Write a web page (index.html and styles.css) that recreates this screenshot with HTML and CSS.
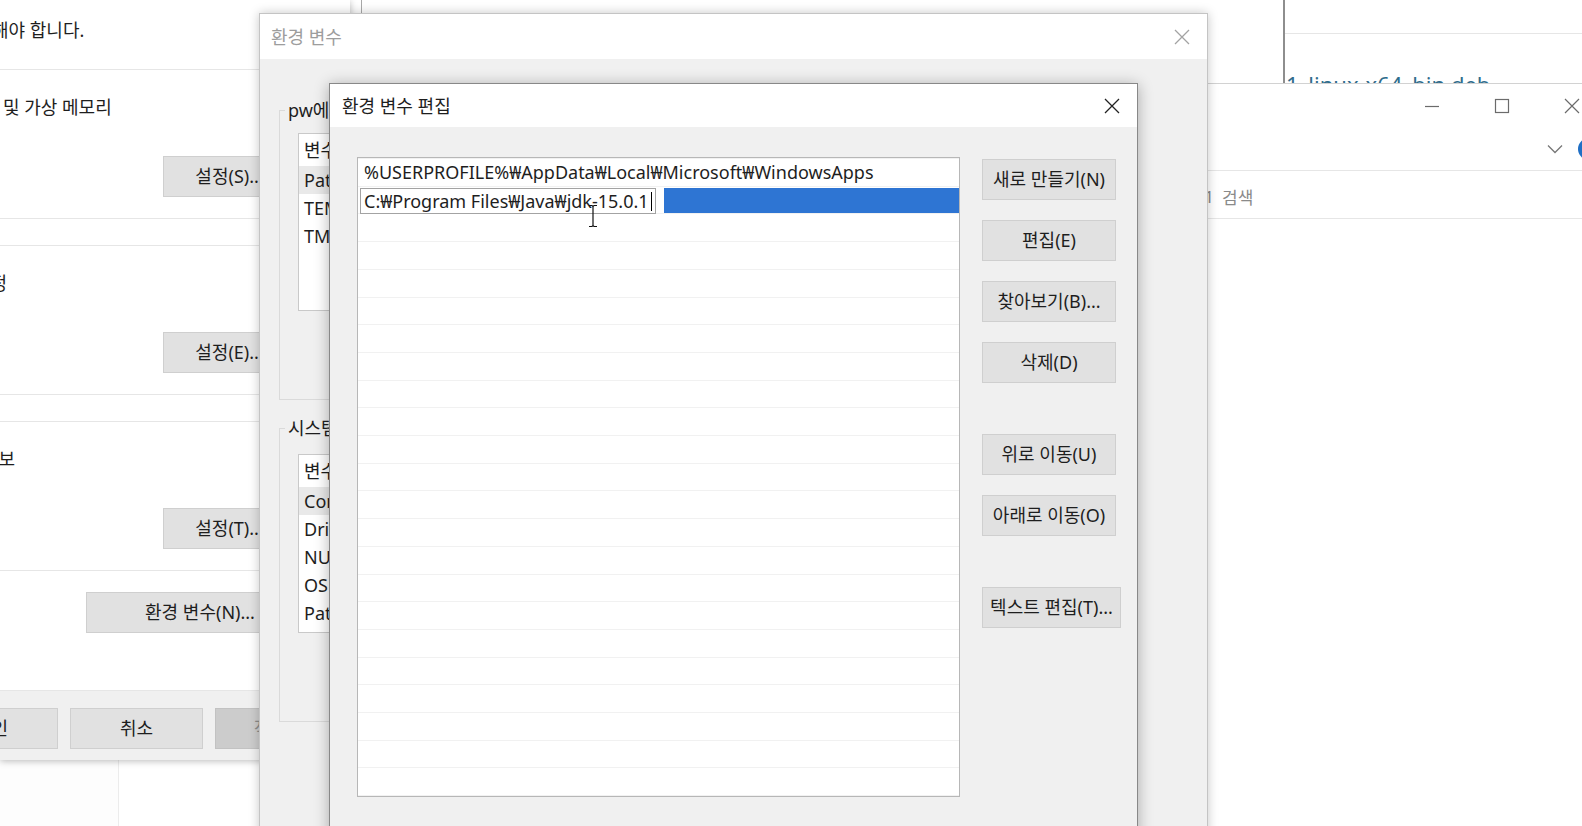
FILE: index.html
```html
<!DOCTYPE html>
<html lang="ko">

<head>
    <meta charset="UTF-8">
    <meta name="viewport" content="width=device-width, initial-scale=1.0">
    <title>환경 변수 편집</title>
    <link rel="stylesheet" href="styles.css">
</head>

<body>
    <div class="desktop">
        <!-- Fenster im Hintergrund -->
        <div class="backwin"></div>

        <div class="win browser">
            <div class="browser-main"></div>
            <div class="browser-side">
                <div class="side-head"></div>
                <div class="side-file">1_linux-x64_bin.deb</div>
            </div>
        </div>

        <!-- Systemeigenschaften -->
        <section class="win sysprops">
            <div class="sp-body">
                <p class="sp-note">해야 합니다.</p>
                <div class="sp-group">
                    <p class="sp-text">및 가상 메모리</p>
                    <button class="btn sp-btn">설정(S)...</button>
                </div>
                <div class="sp-group">
                    <p class="sp-text cut-one">설정</p>
                    <button class="btn sp-btn">설정(E)...</button>
                </div>
                <div class="sp-group">
                    <p class="sp-text cut-two">정보</p>
                    <button class="btn sp-btn">설정(T)...</button>
                </div>
                <button class="btn sp-envbtn">환경 변수(N)...</button>
            </div>
            <div class="sp-footer">
                <button class="btn sp-ok">확인</button>
                <button class="btn">취소</button>
                <button class="btn disabled">적용(A)</button>
            </div>
        </section>

        <!-- Explorer -->
        <section class="win explorer">
            <div class="ex-caption">
                <span class="cap-btn">
                    <svg width="16" height="16" viewBox="0 0 16 16"><path d="M1 8.5H15" stroke="#6b6b6b" stroke-width="1.2" /></svg>
                </span>
                <span class="cap-btn">
                    <svg width="16" height="16" viewBox="0 0 16 16"><rect x="1.5" y="1.5" width="13" height="13" fill="none" stroke="#6b6b6b" stroke-width="1.2" /></svg>
                </span>
                <span class="cap-btn">
                    <svg width="16" height="16" viewBox="0 0 16 16"><path d="M1 1L15 15M15 1L1 15" stroke="#6b6b6b" stroke-width="1.2" /></svg>
                </span>
            </div>
            <div class="ex-address">
                <svg class="chevron" width="16" height="10" viewBox="0 0 16 10"><path d="M1 1.5L8 8.5L15 1.5" fill="none" stroke="#777" stroke-width="1.3" /></svg>
                <span class="help-dot"></span>
            </div>
            <div class="ex-search">
                <span class="ex-folder">jdk-15.0.1</span>
                <span class="ex-hint">검색</span>
            </div>
        </section>

        <!-- Umgebungsvariablen -->
        <section class="win dialog envvars">
            <header class="dlg-title">
                <span>환경 변수</span>
                <svg width="16" height="16" viewBox="0 0 16 16"><path d="M1 1L15 15M15 1L1 15" stroke="#a3a3a3" stroke-width="1.3" /></svg>
            </header>
            <div class="env-body">
                <fieldset class="vargroup">
                    <legend>pw에 대한 사용자 변수(U)</legend>
                    <div class="varlist user">
                        <div class="vl-head">변수</div>
                        <div class="vl-row sel">Path</div>
                        <div class="vl-row">TEMP</div>
                        <div class="vl-row">TMP</div>
                    </div>
                </fieldset>
                <fieldset class="vargroup sys">
                    <legend>시스템 변수(S)</legend>
                    <div class="varlist system">
                        <div class="vl-head">변수</div>
                        <div class="vl-row sel">ComSpec</div>
                        <div class="vl-row">DriverData</div>
                        <div class="vl-row">NUMBER_OF_PROCESSORS</div>
                        <div class="vl-row">OS</div>
                        <div class="vl-row">Path</div>
                    </div>
                </fieldset>
            </div>
        </section>

        <!-- Umgebungsvariable bearbeiten -->
        <section class="win dialog editvar">
            <header class="dlg-title">
                <span>환경 변수 편집</span>
                <svg width="16" height="16" viewBox="0 0 16 16"><path d="M1 1L15 15M15 1L1 15" stroke="#222" stroke-width="1.3" /></svg>
            </header>
            <div class="edit-body">
                <div class="pathlist">
                    <div class="pl-row">%USERPROFILE%₩AppData₩Local₩Microsoft₩WindowsApps</div>
                    <div class="pl-row editing">
                        <span class="pl-editor">C:₩Program Files₩Java₩jdk-15.0.1<i class="caret"></i></span>
                        <span class="pl-selected"></span>
                    </div>
                    <svg class="ibeam" width="10" height="24" viewBox="0 0 10 24">
                        <path d="M1 1.5H4L5 2.5L6 1.5H9M5 2.5V21.5M1 22.5H4L5 21.5L6 22.5H9" fill="none" stroke="#111" stroke-width="1.2" />
                    </svg>
                </div>
                <div class="side-buttons">
                    <button class="btn">새로 만들기(N)</button>
                    <button class="btn">편집(E)</button>
                    <button class="btn">찾아보기(B)...</button>
                    <button class="btn">삭제(D)</button>
                    <button class="btn spaced">위로 이동(U)</button>
                    <button class="btn">아래로 이동(O)</button>
                    <button class="btn spaced wide">텍스트 편집(T)...</button>
                </div>
            </div>
        </section>
    </div>
</body>

</html>
```

FILE: styles.css
```css
html,
body {
    margin: 0;
}

body {
    width: 1582px;
    height: 826px;
    overflow: hidden;
    background: #fff;
    font-family: "Noto Sans", "Noto Sans CJK KR", sans-serif;
    font-size: 18px;
    color: #1e1e1e;
}

.desktop {
    position: relative;
    width: 1582px;
    height: 826px;
    overflow: hidden;
    background: #fdfdfd;
}

.win {
    position: absolute;
    box-sizing: border-box;
}

.btn {
    box-sizing: border-box;
    height: 41px;
    padding: 0;
    background: #e1e1e1;
    border: 1px solid #cfcfcf;
    font: inherit;
    color: inherit;
    line-height: 39px;
    text-align: center;
    white-space: nowrap;
}

.btn.disabled {
    background: #cccccc;
    border-color: #c2c2c2;
    color: #8c8c8c;
}

/* hinten */
.backwin {
    position: absolute;
    left: 118px;
    top: 0;
    width: 400px;
    height: 826px;
    background: #fff;
    border-left: 1px solid #ececec;
}

.browser {
    left: 361px;
    top: 0;
    width: 1221px;
    height: 100px;
    background: #fff;
    border-left: 1px solid #a9a9a9;
    display: flex;
}

.browser-main {
    width: 921px;
}

.browser-side {
    flex: 1;
    border-left: 2px solid #8e8e8e;
}

.side-head {
    height: 33px;
    border-bottom: 1px solid #e6e6e6;
}

.side-file {
    margin-top: 39px;
    padding-left: 1px;
    font-size: 22px;
    line-height: 22px;
    color: #2f6c8c;
    white-space: nowrap;
}

/* Systemeigenschaften */
.sysprops {
    left: 0;
    top: 0;
    width: 350px;
    height: 760px;
    background: #fff;
    display: flex;
    flex-direction: column;
    box-shadow: 0 1px 7px rgba(0, 0, 0, 0.28);
}

.sp-body {
    flex: 1;
    display: flex;
    flex-direction: column;
    padding-right: 54px;
}

.sp-note {
    margin: 0;
    padding: 19px 0 28px;
    line-height: 22px;
    text-indent: -8px;
    border-bottom: 1px solid #e6e6e6;
}

.sp-group {
    display: flex;
    flex-direction: column;
    padding: 26px 0 21px;
    border-bottom: 1px solid #e6e6e6;
}

.sp-group + .sp-group {
    margin-top: 26px;
    border-top: 1px solid #e6e6e6;
}

.sp-text {
    margin: 0;
    padding-left: 3px;
    line-height: 22px;
    white-space: nowrap;
}

.sp-text.cut-one {
    padding-left: 0;
    text-indent: -26px;
}

.sp-text.cut-two {
    padding-left: 0;
    text-indent: -18px;
}

.sp-btn {
    align-self: flex-end;
    width: 133px;
    margin-top: 38px;
}

.sp-envbtn {
    align-self: flex-end;
    width: 228px;
    margin: 21px -18px 0 0;
}

.sp-footer {
    box-sizing: border-box;
    height: 70px;
    padding-top: 17px;
    display: flex;
    gap: 12px;
    background: #f0f0f0;
    border-top: 1px solid #e6e6e6;
}

.sp-footer .btn {
    flex: none;
    width: 133px;
}

.sp-ok {
    margin-left: -75px;
}

/* Explorer */
.explorer {
    left: 1100px;
    top: 83px;
    width: 507px;
    height: 760px;
    background: #fff;
    border-top: 1px solid #d2d2d2;
}

.ex-caption {
    height: 43px;
    display: flex;
    justify-content: flex-end;
}

.cap-btn {
    width: 70px;
    display: flex;
    align-items: center;
    justify-content: center;
}

.ex-address {
    box-sizing: border-box;
    height: 44px;
    padding-right: 7px;
    display: flex;
    align-items: center;
    justify-content: flex-end;
    border-bottom: 1px solid #e6e6e6;
}

.chevron {
    margin-right: 15px;
}

.help-dot {
    width: 22px;
    height: 22px;
    border-radius: 50%;
    background: #1f6fc5;
}

.ex-search {
    box-sizing: border-box;
    height: 48px;
    padding-top: 4px;
    display: flex;
    align-items: center;
    border-bottom: 1px solid #e6e6e6;
    font-size: 17px;
    color: #8a8a8a;
}

.ex-folder {
    width: 114px;
    text-align: right;
    white-space: nowrap;
}

.ex-hint {
    margin-left: 8px;
}

/* Dialoge */
.dialog {
    display: flex;
    flex-direction: column;
    background: #f0f0f0;
}

.dlg-title {
    display: flex;
    align-items: center;
    justify-content: space-between;
    background: #fff;
    line-height: 22px;
}

.envvars {
    left: 259px;
    top: 13px;
    width: 949px;
    height: 830px;
    border: 1px solid #c4c4c4;
    box-shadow: 0 0 10px rgba(0, 0, 0, 0.22);
}

.envvars .dlg-title {
    height: 45px;
    padding: 0 17px 0 11px;
    color: #9d9d9d;
}

.env-body {
    padding: 40px 0 0 19px;
}

.vargroup {
    width: 820px;
    margin: 0;
    padding: 0 0 88px 18px;
    border: 1px solid #dadada;
}

/* der Rest liegt unter dem Bearbeiten-Dialog */
.vargroup legend {
    max-width: 44px;
    margin-left: -13px;
    padding: 0 3px;
    box-sizing: border-box;
    overflow: hidden;
    line-height: 22px;
    white-space: nowrap;
}

.vargroup.sys {
    margin-top: 17px;
}

.varlist {
    box-sizing: border-box;
    width: 780px;
    height: 178px;
    margin-top: 12px;
    background: #fff;
    border: 1px solid #c9c9c9;
}

.varlist.system {
    height: 179px;
    margin-top: 15px;
}

.vl-head {
    height: 32px;
    padding-left: 5px;
    line-height: 32px;
}

.vl-row {
    height: 28px;
    padding-left: 5px;
    line-height: 28px;
    white-space: nowrap;
}

.vl-row.sel {
    background: #e9e9e9;
}

.editvar {
    left: 329px;
    top: 83px;
    width: 809px;
    height: 760px;
    border: 1px solid #888;
    box-shadow: 0 2px 14px rgba(0, 0, 0, 0.3);
}

.editvar .dlg-title {
    height: 43px;
    padding: 0 17px 0 12px;
}

.edit-body {
    display: flex;
    align-items: flex-start;
    padding: 30px 0 0 27px;
}

.pathlist {
    position: relative;
    box-sizing: border-box;
    width: 603px;
    height: 640px;
    padding-top: 1px;
    border: 1px solid #b7b7b7;
    background-color: #fff;
    background-image: repeating-linear-gradient(to bottom, transparent 0, transparent 26.7px, #f1f1f1 26.7px, #f1f1f1 27.7px);
    background-origin: content-box;
}

.pl-row {
    height: 27.7px;
    padding-left: 6px;
    line-height: 27px;
    white-space: nowrap;
}

.pl-row.editing {
    display: flex;
    align-items: flex-start;
    padding: 1px 0 0 2px;
}

.pl-editor {
    box-sizing: border-box;
    height: 26px;
    padding: 0 3px;
    line-height: 24px;
    background: #fff;
    border: 1px solid #a3a3a3;
    white-space: nowrap;
}

.caret {
    display: inline-block;
    width: 1px;
    height: 19px;
    margin-left: 2px;
    vertical-align: -3px;
    background: #000;
}

.pl-selected {
    flex: 1;
    height: 25px;
    margin-left: 8px;
    background: #2e75d3;
}

.ibeam {
    position: absolute;
    left: 230px;
    top: 46px;
}

.side-buttons {
    display: flex;
    flex-direction: column;
    margin-left: 22px;
    padding-top: 2px;
}

.side-buttons .btn {
    width: 134px;
    margin-bottom: 20px;
}

.side-buttons .btn.spaced {
    margin-top: 31px;
}

.side-buttons .btn.wide {
    width: 139px;
}
```
